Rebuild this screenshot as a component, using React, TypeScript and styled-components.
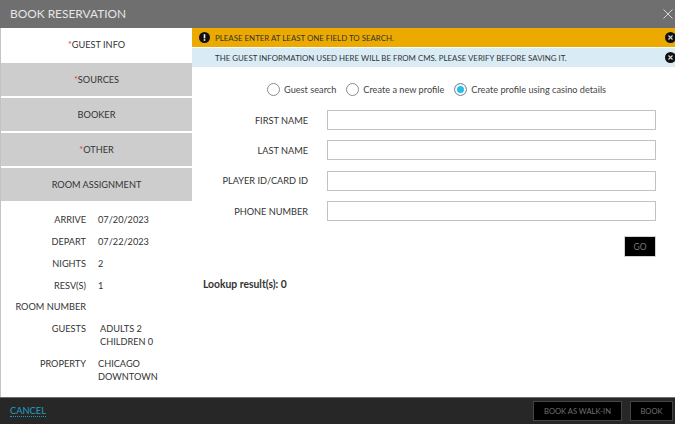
import styled, { createGlobalStyle } from "styled-components";

const GlobalStyle = createGlobalStyle`
  html, body {
    margin: 0;
    padding: 0;
    background: #fff;
    overflow: hidden;
  }
  * {
    box-sizing: border-box;
  }
`;

const Modal = styled.div`
  width: 675px;
  height: 424px;
  display: flex;
  flex-direction: column;
  overflow: hidden;
  font-family: Lato, "Liberation Sans", sans-serif;
  color: #333;
`;

const Header = styled.div`
  height: 28px;
  flex: none;
  padding: 0 0 1px 10px;
  display: flex;
  align-items: center;
  justify-content: space-between;
  background: #6f6f6f;
  color: #e6e6e6;
  font-size: 11.9px;
`;

const CloseIcon = styled.svg`
  width: 12px;
  height: 12px;
  margin-right: 1px;
  margin-top: 1px;
`;

const Body = styled.div`
  flex: 1;
  min-height: 0;
  display: flex;
  border-left: 1px solid #c4c4c4;
`;

const Sidebar = styled.div`
  width: 191px;
  flex: none;
  display: flex;
  flex-direction: column;
`;

const Tab = styled.div<{ $active?: boolean }>`
  height: 33px;
  margin-bottom: 2px;
  display: flex;
  align-items: center;
  justify-content: center;
  background: ${(p) => (p.$active ? "#fff" : "#cdcdcd")};
  font-size: 9.2px;
  color: #333;
`;

const Required = styled.span`
  color: #e0393e;
`;

const Details = styled.div`
  padding-top: 10.3px;
  display: flex;
  flex-direction: column;
`;

const DetailRow = styled.div`
  display: grid;
  grid-template-columns: 85px 1fr;
  column-gap: 12px;
  margin-bottom: 8.8px;
  font-size: 9.2px;
  line-height: 13px;
`;

const DetailLabel = styled.div`
  text-align: right;
`;

const DetailValue = styled.div<{ $indent?: boolean }>`
  padding-left: ${(p) => (p.$indent ? "2px" : "0")};
`;

const Main = styled.div`
  flex: 1;
  min-width: 0;
  display: flex;
  flex-direction: column;
`;

const Alert = styled.div<{ $tone: "warn" | "info" }>`
  height: 20px;
  flex: none;
  display: flex;
  align-items: center;
  padding-left: ${(p) => (p.$tone === "warn" ? "7px" : "23px")};
  background: ${(p) => (p.$tone === "warn" ? "#ecaa00" : "#d9ebf5")};
  border-bottom: 1px solid #fff;
  font-size: 7.9px;
  color: #333;
  position: relative;
`;

const AlertIcon = styled.svg`
  width: 11px;
  height: 11px;
  margin-right: 5px;
`;

const AlertClose = styled.svg`
  position: absolute;
  right: -1px;
  top: 4px;
  width: 11px;
  height: 11px;
`;

const RadioRow = styled.div`
  margin-top: 15px;
  height: 13px;
  padding-left: 75px;
  display: flex;
  align-items: center;
  font-size: 9.2px;
  color: #444;
`;

const RadioOption = styled.label`
  display: flex;
  align-items: center;
  margin-right: 10px;
`;

const RadioCircle = styled.span<{ $checked?: boolean }>`
  width: 13px;
  height: 13px;
  margin-right: 4px;
  border-radius: 50%;
  border: 1px solid #8c8c8c;
  background: ${(p) => (p.$checked ? "#29bde8" : "#fff")};
  box-shadow: ${(p) => (p.$checked ? "inset 0 0 0 2px #fff" : "none")};
`;

const Form = styled.div`
  margin-top: 14px;
  padding: 0 19px 0 0;
  display: flex;
  flex-direction: column;
  gap: 10.4px;
`;

const FormRow = styled.div`
  display: flex;
  align-items: center;
  justify-content: flex-end;
  gap: 19px;
`;

const FormLabel = styled.label`
  font-size: 9.2px;
  color: #333;
`;

const TextInput = styled.input`
  width: 329px;
  height: 20px;
  padding: 0 4px;
  border: 1px solid #c2c2c2;
  border-right-width: 1.5px;
  border-bottom-width: 1.5px;
  background: #fff;
  outline: none;
`;

const GoRow = styled.div`
  margin-top: 15px;
  padding-right: 19px;
  display: flex;
  justify-content: flex-end;
`;

const GoButton = styled.button`
  width: 32px;
  height: 21px;
  padding: 0;
  background: #000;
  border: 1px solid #d2d2d2;
  color: #7a7a7a;
  font: 8.5px Lato, "Liberation Sans", sans-serif;
`;

const Results = styled.div`
  margin-top: 21px;
  padding-left: 11px;
  font-size: 10.35px;
  font-weight: 700;
  color: #333;
`;

const Footer = styled.div`
  height: 27px;
  flex: none;
  display: flex;
  align-items: center;
  justify-content: space-between;
  padding: 0 2px 0 10px;
  background: #272727;
  border-top: 1px solid #6e6e6e;
`;

const CancelLink = styled.a`
  font-size: 9.3px;
  color: #1f9fc0;
  border-bottom: 1px dotted #1f9fc0;
  line-height: 10px;
`;

const FooterActions = styled.div`
  display: flex;
  gap: 8px;
`;

const FooterButton = styled.button<{ $wide?: boolean }>`
  width: ${(p) => (p.$wide ? "89px" : "43px")};
  height: 20px;
  padding: 0;
  background: #000;
  border: 1px solid #444;
  color: #707070;
  font: 7.6px Lato, "Liberation Sans", sans-serif;
`;

const details = [
  { label: "ARRIVE", value: ["07/20/2023"] },
  { label: "DEPART", value: ["07/22/2023"] },
  { label: "NIGHTS", value: ["2"] },
  { label: "RESV(S)", value: ["1"] },
  { label: "ROOM NUMBER", value: [""] },
  { label: "GUESTS", value: ["ADULTS 2", "CHILDREN 0"], indent: true },
  { label: "PROPERTY", value: ["CHICAGO", "DOWNTOWN"] },
];

const fields = ["FIRST NAME", "LAST NAME", "PLAYER ID/CARD ID", "PHONE NUMBER"];

const DismissIcon = () => (
  <AlertClose viewBox="0 0 11 11">
    <circle cx="5.5" cy="5.5" r="5.5" fill="#111" />
    <path d="M3.5 3.5l4 4M7.5 3.5l-4 4" stroke="#d8d8d8" strokeWidth="1.1" />
  </AlertClose>
);

const App = () => {
  return (
    <>
      <GlobalStyle />
      <Modal>
        <Header>
          BOOK RESERVATION
          <CloseIcon viewBox="0 0 12 12">
            <path d="M1.5 1.5l9 9M10.5 1.5l-9 9" stroke="#d4d4d4" strokeWidth="1" fill="none" />
          </CloseIcon>
        </Header>
        <Body>
          <Sidebar>
            <Tab $active>
              <Required>*</Required>GUEST INFO
            </Tab>
            <Tab>
              <Required>*</Required>SOURCES
            </Tab>
            <Tab>BOOKER</Tab>
            <Tab>
              <Required>*</Required>OTHER
            </Tab>
            <Tab>ROOM ASSIGNMENT</Tab>
            <Details>
              {details.map((d) => (
                <DetailRow key={d.label}>
                  <DetailLabel>{d.label}</DetailLabel>
                  <DetailValue $indent={d.indent}>
                    {d.value.map((line) => (
                      <div key={line}>{line}</div>
                    ))}
                  </DetailValue>
                </DetailRow>
              ))}
            </Details>
          </Sidebar>
          <Main>
            <Alert $tone="warn">
              <AlertIcon viewBox="0 0 11 11">
                <circle cx="5.5" cy="5.5" r="5.5" fill="#111" />
                <rect x="4.7" y="2.2" width="1.6" height="4.2" fill="#f2f2f2" />
                <rect x="4.7" y="7.2" width="1.6" height="1.6" fill="#f2f2f2" />
              </AlertIcon>
              PLEASE ENTER AT LEAST ONE FIELD TO SEARCH.
              <DismissIcon />
            </Alert>
            <Alert $tone="info">
              THE GUEST INFORMATION USED HERE WILL BE FROM CMS. PLEASE VERIFY BEFORE SAVING IT.
              <DismissIcon />
            </Alert>
            <RadioRow>
              <RadioOption>
                <RadioCircle />
                Guest search
              </RadioOption>
              <RadioOption>
                <RadioCircle />
                Create a new profile
              </RadioOption>
              <RadioOption>
                <RadioCircle $checked />
                Create profile using casino details
              </RadioOption>
            </RadioRow>
            <Form>
              {fields.map((f) => (
                <FormRow key={f}>
                  <FormLabel>{f}</FormLabel>
                  <TextInput />
                </FormRow>
              ))}
            </Form>
            <GoRow>
              <GoButton>GO</GoButton>
            </GoRow>
            <Results>Lookup result(s): 0</Results>
          </Main>
        </Body>
        <Footer>
          <CancelLink>CANCEL</CancelLink>
          <FooterActions>
            <FooterButton $wide>BOOK AS WALK-IN</FooterButton>
            <FooterButton>BOOK</FooterButton>
          </FooterActions>
        </Footer>
      </Modal>
    </>
  );
};

export default App;
